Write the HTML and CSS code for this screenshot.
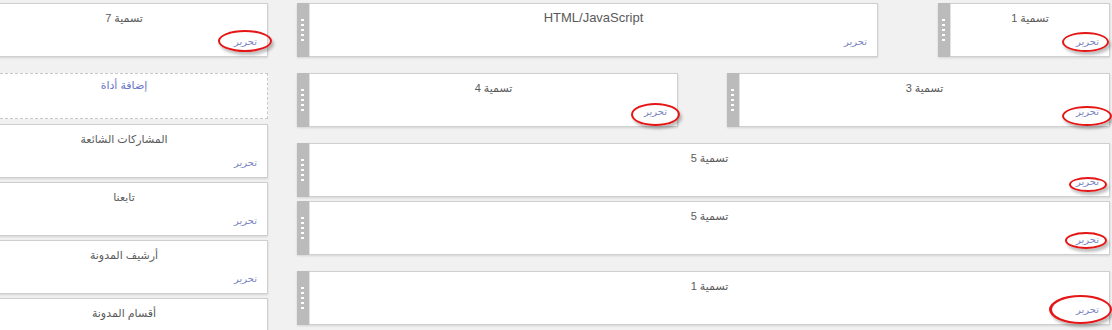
FILE: index.html
```html
<!DOCTYPE html>
<html lang="ar">
  <head>
    <meta charset="UTF-8" />
    <title>تخطيط المدونة</title>
    <link rel="stylesheet" href="styles.css">
  </head>
  <body>
    <div class="layout">
      <div class="sidebar">
        <div class="widget">
          <div class="widget-body">
            <div class="widget-title">تسمية 7</div>
            <a class="edit">تحرير</a>
            <span class="mark mark-side"></span>
          </div>
        </div>
        <div class="add-widget">إضافة أداة</div>
        <div class="widget near">
          <div class="widget-body">
            <div class="widget-title">المشاركات الشائعة</div>
            <a class="edit">تحرير</a>
          </div>
        </div>
        <div class="widget tight">
          <div class="widget-body">
            <div class="widget-title">تابعنا</div>
            <a class="edit">تحرير</a>
          </div>
        </div>
        <div class="widget tight">
          <div class="widget-body">
            <div class="widget-title">أرشيف المدونة</div>
            <a class="edit">تحرير</a>
          </div>
        </div>
        <div class="widget tight">
          <div class="widget-body">
            <div class="widget-title">أقسام المدونة</div>
          </div>
        </div>
      </div>

      <div class="main">
        <div class="row">
          <div class="widget w-html">
            <div class="handle"></div>
            <div class="widget-body">
              <div class="widget-title latin">HTML/JavaScript</div>
              <a class="edit">تحرير</a>
            </div>
          </div>
          <div class="widget w-small">
            <div class="handle"></div>
            <div class="widget-body">
              <div class="widget-title">تسمية 1</div>
              <a class="edit">تحرير</a>
              <span class="mark mark-top"></span>
            </div>
          </div>
        </div>

        <div class="row spaced">
          <div class="widget w-half-l">
            <div class="handle"></div>
            <div class="widget-body">
              <div class="widget-title">تسمية 4</div>
              <a class="edit">تحرير</a>
              <span class="mark mark-half-l"></span>
            </div>
          </div>
          <div class="widget w-half-r">
            <div class="handle"></div>
            <div class="widget-body">
              <div class="widget-title">تسمية 3</div>
              <a class="edit">تحرير</a>
              <span class="mark mark-half-r"></span>
            </div>
          </div>
        </div>

        <div class="widget spaced">
          <div class="handle"></div>
          <div class="widget-body">
            <div class="widget-title">تسمية 5</div>
            <a class="edit">تحرير</a>
            <span class="mark mark-five-a"></span>
          </div>
        </div>
        <div class="widget tight">
          <div class="handle"></div>
          <div class="widget-body">
            <div class="widget-title">تسمية 5</div>
            <a class="edit">تحرير</a>
            <span class="mark mark-five-b"></span>
          </div>
        </div>

        <div class="widget spaced">
          <div class="handle"></div>
          <div class="widget-body">
            <div class="widget-title">تسمية 1</div>
            <a class="edit">تحرير</a>
            <span class="mark mark-last"></span>
          </div>
        </div>
      </div>
    </div>
  </body>
</html>
```

FILE: styles.css
```css
* {
  margin: 0;
  padding: 0;
  box-sizing: border-box;
}
body {
  background-color: #f1f1f1;
  font-family: "Liberation Sans", "DejaVu Sans", sans-serif;
  color: #555;
  overflow: hidden;
}
.layout {
  display: flex;
  padding-top: 3px;
}
.sidebar {
  width: 288px;
  margin-left: -20px;
  display: flex;
  flex-direction: column;
}
.main {
  width: 813px;
  margin-left: 29px;
  display: flex;
  flex-direction: column;
}
.row {
  display: flex;
  justify-content: space-between;
}
.spaced {
  margin-top: 16px;
}
.tight {
  margin-top: 4px;
}
.near {
  margin-top: 5px;
}

/* widget box */
.widget {
  display: flex;
  height: 54px;
  background-color: #fff;
  border: 1px solid #cfcfcf;
  box-shadow: 0 1px 2px rgba(0, 0, 0, 0.12);
}
.widget .handle + .widget-body {
  border-left: 1px solid #e2e2e2;
}
.w-html {
  width: 581px;
}
.w-small {
  width: 172px;
}
.w-half-l {
  width: 381px;
}
.w-half-r {
  width: 383px;
}
.handle {
  width: 12px;
  margin: -1px 0 -1px -1px;
  background-color: #bbb;
  display: flex;
  flex-direction: column;
  justify-content: center;
  align-items: flex-start;
  padding-left: 4px;
}
.handle::before {
  content: "";
  display: block;
  width: 3px;
  height: 2px;
  background-color: #fff;
  box-shadow: 0 5px 0 #fff, 0 10px 0 #fff, 0 15px 0 #fff, 0 20px 0 #fff;
  margin-top: -20px;
}
.widget-body {
  flex: 1;
  position: relative;
  text-align: center;
  padding: 6px 10px 0;
}
.widget-title {
  font-size: 11px;
  line-height: 16px;
  height: 16px;
  color: #5a5a5a;
}
.widget-title.latin {
  font-size: 13px;
}
.edit {
  display: block;
  text-align: right;
  margin-top: 9px;
  font-size: 10px;
  line-height: 13px;
  color: #7c86c4;
}
.add-widget {
  margin-top: 16px;
  height: 46px;
  background-color: #fff;
  border: 1px dashed #c8c8c8;
  text-align: center;
  padding-top: 5px;
  font-size: 11px;
  color: #6b78c6;
}

/* red annotation rings */
.mark {
  position: absolute;
  border: 2px solid #e41616;
  border-radius: 50%;
  box-shadow: 2px 3px 3px rgba(0, 0, 0, 0.25);
}
.mark-side {
  width: 54px;
  height: 22px;
  right: -5px;
  bottom: 4px;
}
.mark-top {
  width: 47px;
  height: 20px;
  right: 0;
  bottom: 4px;
}
.mark-half-l {
  width: 49px;
  height: 23px;
  right: -3px;
  bottom: 0;
}
.mark-half-r {
  width: 50px;
  height: 20px;
  right: -3px;
  bottom: 0;
}
.mark-five-a {
  width: 38px;
  height: 15px;
  right: 2px;
  bottom: 4px;
}
.mark-five-b {
  width: 42px;
  height: 17px;
  right: 2px;
  bottom: 5px;
}
.mark-last {
  width: 63px;
  height: 29px;
  right: -3px;
  bottom: 0;
  border-width: 2px 2px 2px 3px;
}
```
